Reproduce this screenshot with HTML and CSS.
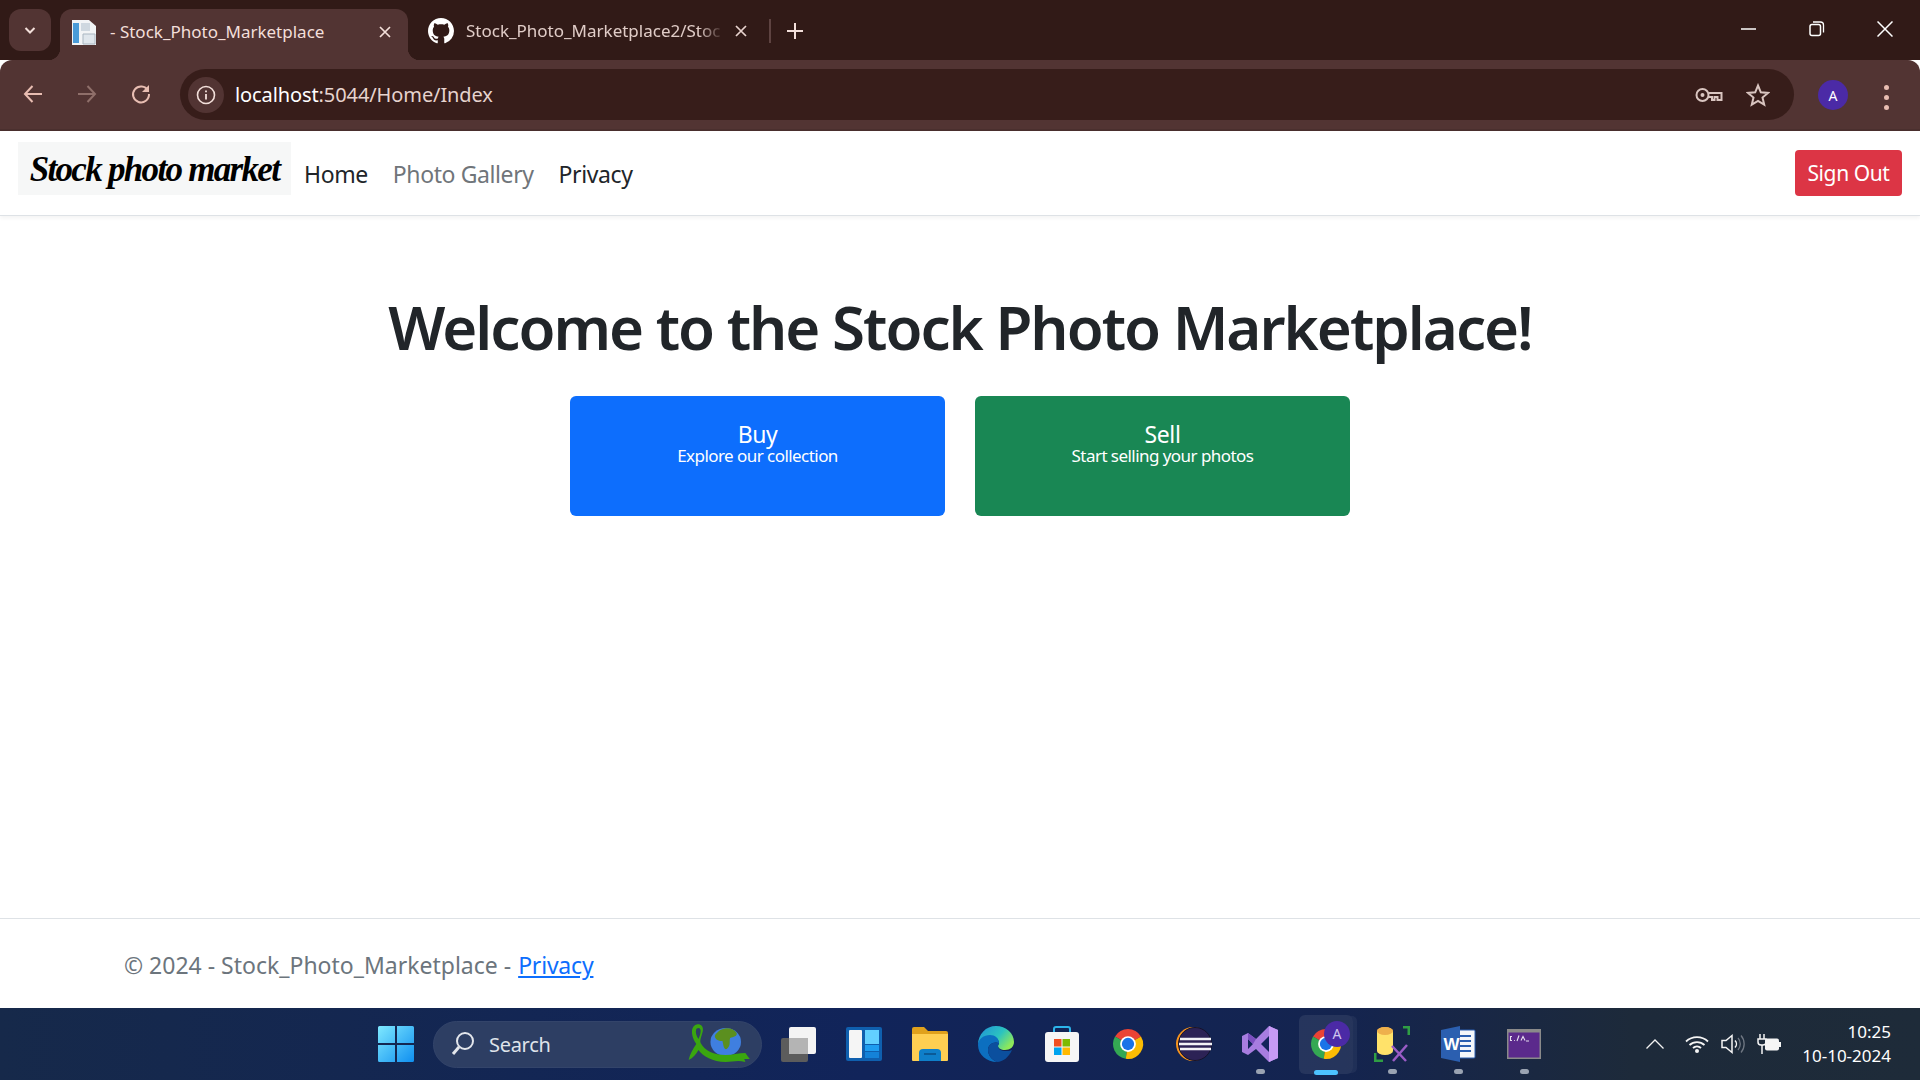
FILE: index.html
```html
<!DOCTYPE html>
<html lang="en">
<head>
    <meta charset="UTF-8">
    <meta name="viewport" content="width=device-width, initial-scale=1.0">
    <title>Stock_Photo_Marketplace</title>
    <link rel="stylesheet" href="styles.css">
</head>
<body>
    <svg class="defs" width="0" height="0">
        <symbol id="chrome" viewBox="0 0 48 48">
            <path fill="#ea4335" d="M24 24L6.68 14A20 20 0 0 1 41.32 14Z"/>
            <path fill="#34a853" d="M24 24L6.68 14A20 20 0 0 0 21 43.8Z"/>
            <path fill="#fbbc04" d="M24 24L41.32 14A20 20 0 0 1 21 43.8Z"/>
            <circle cx="24" cy="24" r="10.5" fill="#fff"/>
            <circle cx="24" cy="24" r="8.2" fill="#1a73e8"/>
        </symbol>
    </svg>

    <div class="tabstrip">
        <div class="tab-search">
            <svg width="14" height="14" viewBox="0 0 14 14"><path d="M2.5 5l4.500 4.500 4.500-4.500" fill="none" stroke="#f3dfda" stroke-width="2"/></svg>
        </div>
        <div class="tab tab-active">
            <svg class="favicon" width="24" height="26" viewBox="0 0 24 26">
                <path fill="#f2f4f6" d="M0 1h17l7 6v19H0z"/>
                <path fill="#4a9bd8" d="M1 4h6v20H1z"/>
                <path fill="#cfd8e0" d="M9 4h9v8H9z"/>
                <path fill="#dfe6ec" stroke="#aab6c1" d="M11 15h12v10H11z"/>
            </svg>
            <span class="tab-title">- Stock_Photo_Marketplace</span>
            <svg class="tab-close" width="14" height="14" viewBox="0 0 14 14"><path d="M2 2l10 10M12 2L2 12" stroke="#f3dfda" stroke-width="1.700"/></svg>
        </div>
        <div class="tab tab-other">
            <svg class="favicon" width="26" height="26" viewBox="0 0 16 16"><path fill="#fff" d="M8 0C3.58 0 0 3.58 0 8c0 3.54 2.29 6.53 5.47 7.59.4.07.55-.17.55-.38 0-.19-.01-.82-.01-1.49-2.01.37-2.53-.49-2.69-.94-.09-.23-.48-.94-.82-1.13-.28-.15-.68-.52-.01-.53.63-.01 1.08.58 1.23.82.72 1.21 1.87.87 2.33.66.07-.52.28-.87.51-1.07-1.78-.2-3.64-.89-3.64-3.95 0-.87.31-1.59.82-2.15-.08-.2-.36-1.02.08-2.12 0 0 .67-.21 2.2.82.64-.18 1.32-.27 2-.27.68 0 1.36.09 2 .27 1.53-1.04 2.2-.82 2.2-.82.44 1.1.16 1.92.08 2.12.51.56.82 1.27.82 2.15 0 3.07-1.87 3.75-3.65 3.95.29.25.54.73.54 1.48 0 1.07-.01 1.93-.01 2.2 0 .21.15.46.55.38A8.013 8.013 0 0 0 16 8c0-4.42-3.58-8-8-8z"/></svg>
            <span class="tab-title tab-title-cut">Stock_Photo_Marketplace2/Stoc</span>
            <svg class="tab-close" width="14" height="14" viewBox="0 0 14 14"><path d="M2 2l10 10M12 2L2 12" stroke="#e8d3ce" stroke-width="1.700"/></svg>
        </div>
        <div class="tab-sep"></div>
        <svg class="tab-new" width="18" height="18" viewBox="0 0 18 18"><path d="M9 1v16M1 9h16" stroke="#f3dfda" stroke-width="2"/></svg>
        <div class="win-controls">
            <svg width="16" height="16" viewBox="0 0 16 16"><path d="M0 8h15" stroke="#fff" stroke-width="1.500"/></svg>
            <svg width="16" height="16" viewBox="0 0 16 16"><rect x="1" y="3.500" width="10.500" height="11" rx="2" fill="none" stroke="#fff" stroke-width="1.500"/><path d="M4 1h7.500A3 3 0 0 1 14.500 4v7.500" fill="none" stroke="#fff" stroke-width="1.300"/></svg>
            <svg width="16" height="16" viewBox="0 0 16 16"><path d="M.5.500l15 15M15.500.500l-15 15" stroke="#fff" stroke-width="1.500"/></svg>
        </div>
    </div>

    <div class="toolbar">
        <svg class="nav-icon" width="22" height="22" viewBox="0 0 22 22"><path d="M20 11H3M10.500 3L3 11l7.500 8" fill="none" stroke="#e8bdb2" stroke-width="2"/></svg>
        <svg class="nav-icon" width="22" height="22" viewBox="0 0 22 22"><path d="M2 11h17M11.500 3L19 11l-7.500 8" fill="none" stroke="#8f6f6a" stroke-width="2"/></svg>
        <svg class="nav-icon" width="22" height="22" viewBox="0 0 22 22"><path d="M18 7.500A8 8 0 1 0 19 11" fill="none" stroke="#e8bdb2" stroke-width="2"/><path d="M19 2v7h-7z" fill="#e8bdb2"/></svg>
        <div class="omnibox">
            <div class="site-info">
                <svg width="20" height="20" viewBox="0 0 20 20"><circle cx="10" cy="10" r="8.500" fill="none" stroke="#f3dfda" stroke-width="1.600"/><path d="M10 9v5.500M10 5.500v1.800" stroke="#f3dfda" stroke-width="1.800"/></svg>
            </div>
            <div class="url">localhost<span class="url-path">:5044/Home/Index</span></div>
            <svg class="key-icon" width="28" height="16" viewBox="0 0 28 16"><circle cx="7.500" cy="8" r="6" fill="none" stroke="#d9c5c0" stroke-width="2"/><circle cx="7.500" cy="8" r="2" fill="#d9c5c0"/><path d="M13.500 6H26.500V13H22.500V10H19.500V13H17V10H13.500" fill="none" stroke="#d9c5c0" stroke-width="2"/></svg>
            <svg class="star-icon" width="24" height="24" viewBox="0 0 24 24"><path d="M12 2.500l2.800 6.800 7.200.6-5.500 4.700 1.700 7-6.200-3.800-6.200 3.800 1.700-7L2 9.900l7.200-.6z" fill="none" stroke="#d9c5c0" stroke-width="2"/></svg>
        </div>
        <div class="avatar">A</div>
        <div class="menu-dots"><i></i><i></i><i></i></div>
    </div>

    <nav class="navbar">
        <a class="brand">Stock photo market</a>
        <a class="nav-link">Home</a>
        <a class="nav-link nav-link-muted">Photo Gallery</a>
        <a class="nav-link">Privacy</a>
        <button class="btn-signout">Sign Out</button>
    </nav>

    <main class="main">
        <h1>Welcome to the Stock Photo Marketplace!</h1>
        <div class="choices">
            <a class="choice choice-buy"><span class="choice-title">Buy</span><span class="choice-sub">Explore our collection</span></a>
            <a class="choice choice-sell"><span class="choice-title">Sell</span><span class="choice-sub">Start selling your photos</span></a>
        </div>
    </main>

    <footer class="footer">&copy; 2024 - Stock_Photo_Marketplace - <a class="footer-link">Privacy</a></footer>

    <div class="taskbar">
        <div class="task-item">
            <svg width="36" height="36" viewBox="0 0 36 36">
                <defs><linearGradient id="win" x1="0" y1="0" x2="1" y2="1"><stop offset="0" stop-color="#7fe9ff"/><stop offset="1" stop-color="#0f8ff0"/></linearGradient></defs>
                <path fill="url(#win)" d="M0 1.500A1.500 1.500 0 0 1 1.500 0H17V17H0zM19 0H34.500A1.500 1.500 0 0 1 36 1.500V17H19zM0 19H17V36H1.500A1.500 1.500 0 0 1 0 34.500zM19 19H36V34.500A1.500 1.500 0 0 1 34.500 36H19z"/>
            </svg>
        </div>
        <div class="task-search">
            <svg width="24" height="26" viewBox="0 0 24 26"><circle cx="14" cy="10" r="8" fill="none" stroke="#e3e6ec" stroke-width="2"/><path d="M8 16l-6 7" stroke="#e3e6ec" stroke-width="3"/></svg>
            <span class="task-search-text">Search</span>
            <svg class="ribbon" width="72" height="42" viewBox="0 0 66 42" preserveAspectRatio="none">
                <circle cx="41" cy="19" r="14" fill="#3f7fe0"/>
                <path fill="#5b8f1f" d="M36 7c6-3 12-2 15 3 1 3-3 4-6 5-1 4 1 7-3 11-3 1-3-4-4-8-4 0-7-2-7-5 1-3 3-4 5-6z"/>
                <path fill="#3aa60f" d="M13 2c4-2 8 1 7 6-1 5-3 9-2 12 4 8 12 12 23 12 6 0 12-2 18-2l4 6-5 0 1 3c-7-2-12 0-18 0-12 0-21-6-25-12-2 4-5 8-9 10 1-6 4-11 7-16C10 15 8 5 13 2zm1 4c-1 3 0 7 2 10 1-3 2-5 2-8s-2-4-4-2z"/>
            </svg>
        </div>
        <div class="task-item">
            <svg width="36" height="36" viewBox="0 0 36 36">
                <rect x="1" y="12" width="27" height="24" rx="2" fill="#5c5c5c"/>
                <rect x="9" y="1" width="27" height="27" rx="2" fill="#f4f4f4"/>
                <path d="M9 12h19v16H9z" fill="#b4b4b4"/>
            </svg>
        </div>
        <div class="task-item">
            <svg width="36" height="36" viewBox="0 0 36 36">
                <rect x="0" y="1" width="36" height="34" rx="2" fill="#0f5fae"/>
                <rect x="3" y="4" width="13" height="28" rx="1" fill="#f5f5f5"/>
                <path d="M19 4h14v14H19z" fill="#62d0ff"/>
                <path d="M19 19h14v6H19z" fill="#1e9df0"/>
                <path d="M19 26h14v6H19z" fill="#1482d8"/>
            </svg>
        </div>
        <div class="task-item">
            <svg width="36" height="36" viewBox="0 0 36 36">
                <path d="M0 3a2 2 0 0 1 2-2h10l4 4h18a2 2 0 0 1 2 2v3H0z" fill="#e0a11c"/>
                <path d="M0 8h36v26a1 1 0 0 1-1 1H1a1 1 0 0 1-1-1z" fill="#ffcf52"/>
                <path d="M7 35V27a4 4 0 0 1 4-4h14a4 4 0 0 1 4 4v8z" fill="#0f7fc9"/>
                <path d="M12 28h12" stroke="#0b5a96" stroke-width="2"/>
            </svg>
        </div>
        <div class="task-item">
            <svg width="36" height="36" viewBox="0 0 36 36">
                <defs><linearGradient id="edge" x1="0" y1="0" x2="1" y2="0.600"><stop offset="0" stop-color="#1f8fd8"/><stop offset=".6" stop-color="#2bc3c0"/><stop offset="1" stop-color="#8ee85a"/></linearGradient></defs>
                <path fill="url(#edge)" d="M18 0c10 0 18 7 18 16 0 5-4 8-9 8-4 0-7-2-7-4 0-1 1-2 1-3 0-4-5-7-9-7C6 10 1 14 0 19 0 8 8 0 18 0z"/>
                <path fill="#0c6fc0" d="M0 19c0-6 6-10 12-10 5 0 9 3 9 8-6-2-11 2-11 7 0 5 4 10 9 12C9 36 0 29 0 19z"/>
                <path fill="#0b4f9e" d="M10 24c0-5 5-9 11-7 0 1-1 2-1 3 0 3 3 5 8 5 2 0 4 0 6-1-3 7-9 12-15 12-5-2-9-7-9-12z"/>
            </svg>
        </div>
        <div class="task-item">
            <svg width="36" height="36" viewBox="0 0 36 36">
                <path d="M10 8V3a2 2 0 0 1 2-2h12a2 2 0 0 1 2 2v5" fill="none" stroke="#2cb4ea" stroke-width="2"/>
                <rect x="1" y="6" width="34" height="30" rx="3" fill="#f6f6f6"/>
                <path d="M10 13h7.500v7.500H10z" fill="#f25022"/>
                <path d="M18.500 13H26v7.500h-7.500z" fill="#7fba00"/>
                <path d="M10 21.500h7.500V29H10z" fill="#00a4ef"/>
                <path d="M18.500 21.500H26V29h-7.500z" fill="#ffb900"/>
            </svg>
        </div>
        <div class="task-item"><svg width="36" height="36"><use href="#chrome"/></svg></div>
        <div class="task-item">
            <svg width="36" height="36" viewBox="0 0 36 36">
                <circle cx="17" cy="18" r="17" fill="#f7941e"/>
                <circle cx="19" cy="18" r="16.500" fill="#2c2255" stroke="#14122a"/>
                <path d="M4 13h31M3 18h33M4 23h31" stroke="#f2f2f6" stroke-width="2.500"/>
            </svg>
        </div>
        <div class="task-item">
            <svg width="36" height="36" viewBox="0 0 36 36">
                <path d="M27 0l9 4v28l-9 4-13-13-8 6-6-3V10l6-3 8 6z" fill="#a77de0"/>
                <path d="M27 0l9 4v28l-9 4z" fill="#c79bf5"/>
                <path d="M27 10L19 18l8 8zM6 13v10l5-5z" fill="#12245a"/>
                <path d="M6 7l8 6-3 5-5-5z" fill="#7b4fc0"/>
            </svg>
            <i class="task-dot"></i>
        </div>
        <div class="task-item task-item-active">
            <svg width="36" height="36"><use href="#chrome"/></svg>
            <span class="task-badge">A</span>
            <i class="task-running"></i>
        </div>
        <div class="task-item">
            <svg width="36" height="36" viewBox="0 0 36 36">
                <path d="M29 1h6v8M1 27v8h8" fill="none" stroke="#2f9e44" stroke-width="3"/>
                <ellipse cx="11" cy="5" rx="8" ry="4" fill="#e8a33c"/>
                <path d="M3 5v20a8 4 0 0 0 16 0V5z" fill="#ffe26a"/>
                <ellipse cx="11" cy="5" rx="8" ry="4" fill="#eeb04c"/>
                <path d="M18 20l14 15M33 19L19 35" stroke="#9a5cc6" stroke-width="2.500"/>
            </svg>
            <i class="task-dot"></i>
        </div>
        <div class="task-item">
            <svg width="36" height="36" viewBox="0 0 36 36">
                <rect x="14" y="4" width="21" height="28" rx="1" fill="#f5f7fa" stroke="#2b5fb0"/>
                <path d="M19 10h12M19 15h12M19 20h12M19 25h12" stroke="#2b5fb0" stroke-width="2"/>
                <path d="M1 4l19-4v36L1 32z" fill="#2b5fb0"/>
                <text x="3.500" y="24" class="word-letter">W</text>
            </svg>
            <i class="task-dot"></i>
        </div>
        <div class="task-item">
            <svg width="36" height="36" viewBox="0 0 36 36">
                <rect x="1" y="3" width="34" height="30" fill="#8a8a8a"/>
                <rect x="2.500" y="6.500" width="31" height="25" fill="#5b2a8c"/>
                <path d="M6 10.500H4.500v4H6M8 14.500h.8M13 9.500l-2 5.500M15 14.500l2-4 2 4M20 15h3" fill="none" stroke="#e6e0ee" stroke-width="1.100"/>
            </svg>
            <i class="task-dot"></i>
        </div>
        <div class="tray">
            <svg width="18" height="10" viewBox="0 0 18 10"><path d="M.5 9.500L9 1l8.500 8.500" fill="none" stroke="#f2f2f2" stroke-width="1.300"/></svg>
            <svg class="tray-wifi" width="24" height="18" viewBox="0 0 24 18"><path d="M1 6.500a16 16 0 0 1 22 0M4.500 10a11 11 0 0 1 15 0M8 13a6 6 0 0 1 8 0" fill="none" stroke="#f5f5f5" stroke-width="1.800"/><circle cx="12" cy="16" r="2" fill="#f5f5f5"/></svg>
            <svg class="tray-sound" width="24" height="22" viewBox="0 0 24 22"><path d="M1 7.500h4l6-5v17l-6-5H1z" fill="none" stroke="#f5f5f5" stroke-width="1.500"/><path d="M14 7.500a5 5 0 0 1 0 7" fill="none" stroke="#f5f5f5" stroke-width="1.500"/><path d="M17 5a9 9 0 0 1 0 12M20 2.500a13 13 0 0 1 0 17" fill="none" stroke="#6f7782" stroke-width="1.300"/></svg>
            <svg class="tray-battery" width="24" height="20" viewBox="0 0 24 20"><path d="M3 0v5M7 0v5M1 5h8v3a3 3 0 0 1-3 3H4a3 3 0 0 1-3-3zM5 11v9" fill="none" stroke="#f5f5f5" stroke-width="1.500"/><rect x="8" y="4.500" width="14" height="12" rx="2" fill="#f5f5f5"/><path d="M23 8v5" stroke="#f5f5f5" stroke-width="2"/></svg>
            <div class="clock"><span>10:25</span><span>10-10-2024</span></div>
        </div>
    </div>
</body>
</html>
```

FILE: styles.css
```css
* {
    box-sizing: border-box;
}
html, body {
    height: 100%;
}
body {
    margin: 0;
    display: flex;
    flex-direction: column;
    height: 1080px;
    overflow: hidden;
    font-family: "Noto Sans", "Open Sans", sans-serif;
    color: #212529;
    background: #fff;
}
.defs {
    position: absolute;
}

/* browser chrome */
.tabstrip {
    display: flex;
    align-items: flex-start;
    height: 60px;
    padding: 9px 0 0 9px;
    background: #311a17;
}
.tab-search {
    display: flex;
    align-items: center;
    justify-content: center;
    width: 42px;
    height: 42px;
    margin-right: 9px;
    border-radius: 12px;
    background: #523433;
}
.tab {
    display: flex;
    align-items: center;
    height: 51px;
    color: #f3dfda;
    font-size: 17px;
    white-space: nowrap;
}
.tab-active {
    position: relative;
    width: 348px;
    padding: 0 16px 6px 12px;
    border-radius: 12px 12px 0 0;
    background: #523433;
}
.tab-active .favicon {
    margin-right: 14px;
}
.tab-active::before,
.tab-active::after {
    content: "";
    position: absolute;
    bottom: 0;
    width: 12px;
    height: 12px;
}
.tab-active::before {
    left: -12px;
    background: radial-gradient(circle at 0 0, #311a17 12px, #523433 12.500px);
}
.tab-active::after {
    right: -12px;
    background: radial-gradient(circle at 100% 0, #311a17 12px, #523433 12.500px);
}
.tab-other {
    width: 352px;
    padding: 0 12px 8px 20px;
    color: #e0ccc7;
}
.favicon {
    flex: none;
    margin-right: 12px;
}
.tab-title {
    flex: 1;
    overflow: hidden;
}
.tab-title-cut {
    -webkit-mask-image: linear-gradient(to right, #000 90%, transparent);
    mask-image: linear-gradient(to right, #000 90%, transparent);
}
.tab-close {
    flex: none;
    margin-left: 10px;
}
.tab-sep {
    width: 2px;
    height: 24px;
    margin: 10px 0 0 9px;
    background: #5e4341;
}
.tab-new {
    margin: 13px 0 0 15px;
}
.win-controls {
    display: flex;
    gap: 52px;
    margin: 12px 27px 0 auto;
}

.toolbar {
    display: flex;
    align-items: flex-start;
    height: 71px;
    padding: 9px 15px 0 22px;
    border-radius: 12px 12px 0 0;
    border-bottom: 2px solid #4a2f2e;
    background: #523433;
}
.nav-icon {
    flex: none;
    margin: 14px 32px 0 0;
}
.nav-icon + .omnibox {
    margin-left: -4px;
}
.omnibox {
    display: flex;
    align-items: center;
    width: 1614px;
    height: 51px;
    padding: 0 24px 0 8px;
    border-radius: 26px;
    background: #371d1a;
    margin-right: 24px;
}
.site-info {
    display: flex;
    align-items: center;
    justify-content: center;
    width: 36px;
    height: 36px;
    margin-right: 11px;
    border-radius: 50%;
    background: #523433;
}
.url {
    flex: 1;
    color: #fff;
    font-size: 20px;
    letter-spacing: -.1px;
}
.url-path {
    color: #e6d3ce;
}
.star-icon {
    margin-left: 23px;
}
.avatar {
    display: flex;
    align-items: center;
    justify-content: center;
    flex: none;
    width: 30px;
    height: 30px;
    margin: 11px 0 0 0;
    border-radius: 50%;
    background: #4b2aa6;
    color: #fff;
    font-size: 14px;
}
.menu-dots {
    display: flex;
    flex-direction: column;
    gap: 5px;
    margin: 16px 0 0 36px;
}
.menu-dots i {
    width: 5px;
    height: 5px;
    border-radius: 50%;
    background: #e8bdb2;
}

/* page */
.navbar {
    display: flex;
    align-items: center;
    height: 85px;
    padding: 2px 18px 0 18px;
    border-bottom: 1px solid #dee2e6;
    box-shadow: 0 2px 4px rgba(0, 0, 0, .05);
    font-size: 23px;
}
.brand {
    display: block;
    flex: none;
    width: 273px;
    height: 53px;
    margin: -12px 13px 0 0;
    background: #f6f7f7;
    color: #000;
    font-family: "Liberation Serif", serif;
    font-style: italic;
    font-weight: bold;
    font-size: 35px;
    line-height: 55px;
    letter-spacing: -1.7px;
    text-align: center;
    white-space: nowrap;
}
.nav-link {
    margin-right: 25px;
    letter-spacing: -.4px;
}
.nav-link-muted {
    color: #70757a;
}
.btn-signout {
    margin-left: auto;
    margin-top: -3px;
    width: 107px;
    height: 46px;
    padding: 0;
    border: none;
    border-radius: 4px;
    background: #dc3545;
    color: #fff;
    font: inherit;
    font-size: 21px;
    letter-spacing: -.4px;
}
.main {
    flex: 1;
    display: flex;
    flex-direction: column;
    align-items: center;
    padding-top: 69px;
}
h1 {
    margin: 0 0 27px;
    font-size: 60px;
    font-weight: 600;
    line-height: 84px;
    letter-spacing: -2px;
}
.choices {
    display: flex;
    gap: 30px;
}
.choice {
    display: flex;
    flex-direction: column;
    align-items: center;
    width: 375px;
    height: 120px;
    padding-top: 25px;
    border-radius: 6px;
    color: #fff;
}
.choice-buy {
    background: #0d6efd;
}
.choice-sell {
    background: #198754;
}
.choice-title {
    font-size: 23px;
    line-height: 26px;
    letter-spacing: -.4px;
}
.choice-sub {
    font-size: 17px;
    line-height: 18px;
    letter-spacing: -.55px;
}
.footer {
    height: 90px;
    padding-left: 124px;
    border-top: 1px solid #dee2e6;
    color: #6c757d;
    font-size: 23px;
    line-height: 92px;
}
.footer-link {
    color: #0d6efd;
    letter-spacing: -.2px;
    margin-left: 1px;
    text-decoration: underline;
}

/* windows taskbar */
.taskbar {
    display: flex;
    align-items: center;
    flex: none;
    height: 72px;
    padding-left: 363px;
    background: linear-gradient(to right, #16294a 0, #11245a 45%, #14244f 70%, #1d2a3a 85%, #1e2b39 100%);
}
.task-item {
    position: relative;
    display: flex;
    align-items: center;
    justify-content: center;
    flex: none;
    width: 66px;
    height: 72px;
}
.task-item-active::before {
    content: "";
    position: absolute;
    left: 6px;
    top: 7px;
    width: 54px;
    height: 59px;
    border-radius: 6px;
    background: rgba(255, 255, 255, .08);
    box-shadow: 5px 0 0 -1px rgba(255, 255, 255, .05);
}
.task-item svg {
    position: relative;
}
.task-badge {
    position: absolute;
    top: 13px;
    right: 9px;
    width: 26px;
    height: 26px;
    border-radius: 50%;
    background: #4b2aa6;
    color: #cfc4ee;
    font-size: 14px;
    line-height: 26px;
    text-align: center;
}
.task-running {
    position: absolute;
    left: 21px;
    bottom: 5px;
    width: 24px;
    height: 5px;
    border-radius: 3px;
    background: #4cc2ff;
}
.task-dot {
    position: absolute;
    left: 29px;
    bottom: 6px;
    width: 9px;
    height: 5px;
    border-radius: 3px;
    background: #9aa3b2;
}
.word-letter {
    fill: #fff;
    font-family: "Liberation Sans", sans-serif;
    font-size: 17px;
    font-weight: bold;
}
.task-search {
    display: flex;
    align-items: center;
    flex: none;
    width: 329px;
    height: 47px;
    margin: 0 3px 0 4px;
    padding: 0 8px 0 17px;
    border-radius: 24px;
    background: #2d3e63;
    border: 1px solid #33446a;
}
.task-search-text {
    flex: 1;
    margin-left: 14px;
    color: #dfe3ea;
    font-size: 20px;
    letter-spacing: -.3px;
}
.tray {
    display: flex;
    align-items: center;
    margin-left: auto;
    padding-right: 29px;
    color: #fff;
}
.tray-wifi {
    margin-left: 21px;
}
.tray-sound {
    margin-left: 12px;
}
.tray-battery {
    margin-left: 12px;
}
.clock {
    display: flex;
    flex-direction: column;
    align-items: flex-end;
    margin-left: 21px;
    font-size: 17px;
    line-height: 24px;
}
```
